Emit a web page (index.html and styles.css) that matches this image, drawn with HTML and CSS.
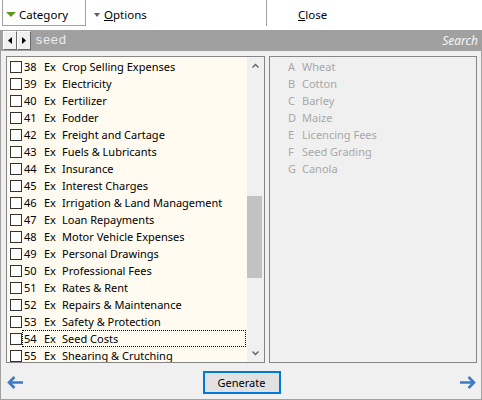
FILE: index.html
```html
<!DOCTYPE html>
<html>
<head>
<meta charset="utf-8">
<link rel="stylesheet" href="styles.css">
</head>
<body>
<div class="menubar">
  <div class="menu-left">
    <div class="menu cat"><span class="tri tri-green"></span><span>Category</span></div>
    <div class="menu opt"><span class="tri tri-gray"></span><span><u>O</u>ptions</span></div>
  </div>
  <div class="menu-right"><span><u>C</u>lose</span></div>
</div>
<div class="window">
  <div class="searchbar">
    <button class="nav"><svg width="4" height="7" viewBox="0 0 4 7"><path d="M4 0 L0 3.5 L4 7 Z" fill="#000"/></svg></button>
    <button class="nav"><svg width="4" height="7" viewBox="0 0 4 7"><path d="M0 0 L4 3.5 L0 7 Z" fill="#000"/></svg></button>
    <span class="query">seed</span>
    <span class="hint">Search</span>
  </div>
  <div class="panes">
    <div class="listbox">
      <ul class="items">
        <li class="row"><span class="cb"></span><span class="lbl"><span class="num">38</span><span class="ex">Ex</span><span>Crop Selling Expenses</span></span></li>
        <li class="row"><span class="cb"></span><span class="lbl"><span class="num">39</span><span class="ex">Ex</span><span>Electricity</span></span></li>
        <li class="row"><span class="cb"></span><span class="lbl"><span class="num">40</span><span class="ex">Ex</span><span>Fertilizer</span></span></li>
        <li class="row"><span class="cb"></span><span class="lbl"><span class="num">41</span><span class="ex">Ex</span><span>Fodder</span></span></li>
        <li class="row"><span class="cb"></span><span class="lbl"><span class="num">42</span><span class="ex">Ex</span><span>Freight and Cartage</span></span></li>
        <li class="row"><span class="cb"></span><span class="lbl"><span class="num">43</span><span class="ex">Ex</span><span>Fuels &amp; Lubricants</span></span></li>
        <li class="row"><span class="cb"></span><span class="lbl"><span class="num">44</span><span class="ex">Ex</span><span>Insurance</span></span></li>
        <li class="row"><span class="cb"></span><span class="lbl"><span class="num">45</span><span class="ex">Ex</span><span>Interest Charges</span></span></li>
        <li class="row"><span class="cb"></span><span class="lbl"><span class="num">46</span><span class="ex">Ex</span><span>Irrigation &amp; Land Management</span></span></li>
        <li class="row"><span class="cb"></span><span class="lbl"><span class="num">47</span><span class="ex">Ex</span><span>Loan Repayments</span></span></li>
        <li class="row"><span class="cb"></span><span class="lbl"><span class="num">48</span><span class="ex">Ex</span><span>Motor Vehicle Expenses</span></span></li>
        <li class="row"><span class="cb"></span><span class="lbl"><span class="num">49</span><span class="ex">Ex</span><span>Personal Drawings</span></span></li>
        <li class="row"><span class="cb"></span><span class="lbl"><span class="num">50</span><span class="ex">Ex</span><span>Professional Fees</span></span></li>
        <li class="row"><span class="cb"></span><span class="lbl"><span class="num">51</span><span class="ex">Ex</span><span>Rates &amp; Rent</span></span></li>
        <li class="row"><span class="cb"></span><span class="lbl"><span class="num">52</span><span class="ex">Ex</span><span>Repairs &amp; Maintenance</span></span></li>
        <li class="row"><span class="cb"></span><span class="lbl"><span class="num">53</span><span class="ex">Ex</span><span>Safety &amp; Protection</span></span></li>
        <li class="row"><span class="cb"></span><span class="lbl focus"><span class="num">54</span><span class="ex">Ex</span><span>Seed Costs</span></span></li>
        <li class="row"><span class="cb"></span><span class="lbl"><span class="num">55</span><span class="ex">Ex</span><span>Shearing &amp; Crutching</span></span></li>
      </ul>
      <div class="scrollbar">
        <div class="sb-btn"><svg width="7" height="5" viewBox="0 0 7 5"><path d="M0.5 4.5 L3.5 1.5 L6.5 4.5" fill="none" stroke="#606060" stroke-width="1.4"/></svg></div>
        <div class="sb-track"><div class="sb-thumb"></div></div>
        <div class="sb-btn"><svg width="7" height="5" viewBox="0 0 7 5"><path d="M0.5 0.5 L3.5 3.5 L6.5 0.5" fill="none" stroke="#606060" stroke-width="1.4"/></svg></div>
      </div>
    </div>
    <div class="subpanel">
      <ul class="subitems">
        <li class="srow"><span class="let">A</span><span>Wheat</span></li>
        <li class="srow"><span class="let">B</span><span>Cotton</span></li>
        <li class="srow"><span class="let">C</span><span>Barley</span></li>
        <li class="srow"><span class="let">D</span><span>Maize</span></li>
        <li class="srow"><span class="let">E</span><span>Licencing Fees</span></li>
        <li class="srow"><span class="let">F</span><span>Seed Grading</span></li>
        <li class="srow"><span class="let">G</span><span>Canola</span></li>
      </ul>
    </div>
  </div>
  <div class="footer">
    <svg class="arrow" width="17" height="13" viewBox="0 0 17 13"><path d="M7.5 1 L2 6.5 L7.5 12 M2.5 6.5 H16" fill="none" stroke="#3d7cc2" stroke-width="2.6"/></svg>
    <button class="generate">Generate</button>
    <svg class="arrow" width="17" height="13" viewBox="0 0 17 13"><path d="M9.5 1 L15 6.5 L9.5 12 M14.5 6.5 H1" fill="none" stroke="#3d7cc2" stroke-width="2.6"/></svg>
  </div>
</div>
</body>
</html>
```

FILE: styles.css
```css
* { box-sizing: border-box; }
html, body { margin: 0; padding: 0; }
body {
  width: 482px;
  height: 400px;
  overflow: hidden;
  background: #ffffff;
  font-family: "Noto Sans", "Open Sans", sans-serif;
  font-size: 11px;
  color: #000;
}
ul { list-style: none; margin: 0; padding: 0; }
button { font-family: inherit; margin: 0; padding: 0; }

.menubar { height: 30px; display: grid; grid-template-columns: 266px 1fr; }
.menu-left { display: flex; align-items: flex-start; }
.menu { display: flex; align-items: center; height: 26px; font-size: 11.5px; padding-top: 3px; }
.cat {
  width: 84px;
  margin-left: 2px;
  border: 1px solid #a0a0a0;
  border-top: none;
  padding-left: 3px;
}
.opt { margin-left: 8px; }
.tri { display: inline-block; width: 0; height: 0; border-style: solid; border-color: transparent; }
.tri-green { border-width: 5px 5px 0 5px; border-top-color: #5b9a1e; margin-right: 3px; }
.tri-gray { border-width: 4px 3.5px 0 3.5px; border-top-color: #606060; margin-right: 4px; }
.menu-right {
  height: 26px;
  border-left: 1px solid #a0a0a0;
  padding-left: 31px;
  padding-top: 3px;
  display: flex;
  align-items: center;
  font-size: 11.5px;
}

.window {
  height: 370px;
  border: 1px solid #a0a0a0;
  border-top: none;
  background: #f0f0f0;
}
.searchbar {
  height: 21px;
  background: #a0a0a0;
  display: flex;
  align-items: center;
  padding: 1px 2px;
}
.nav {
  width: 14px;
  height: 19px;
  background: #f0f0f0;
  border: 1px solid;
  border-color: #ffffff #696969 #696969 #ffffff;
  display: flex;
  align-items: center;
  justify-content: center;
}
.query {
  margin-left: 4px;
  font-family: "Liberation Mono", monospace;
  font-size: 13px;
  color: #ececec;
}
.hint {
  margin-left: auto;
  margin-right: 1px;
  font-style: italic;
  font-size: 12px;
  color: #f6f6f6;
}

.panes { display: flex; margin-top: 5px; padding-left: 5px; }
.listbox {
  width: 259px;
  height: 307px;
  border: 1px solid #868686;
  display: flex;
  overflow: hidden;
}
.items {
  width: 240px;
  background: #fffbf0;
  padding-top: 1px;
  overflow: hidden;
}
.row { height: 17px; display: flex; align-items: center; }
.cb {
  width: 12px;
  height: 12px;
  margin-left: 3px;
  border: 1px solid #333333;
  background: #ffffff;
  flex: none;
}
.lbl {
  flex: 1;
  margin-right: 1px;
  height: 17px;
  border: 1px solid transparent;
  padding-left: 1px;
  display: flex;
  align-items: center;
  white-space: nowrap;
}
.lbl.focus { border: 1px dotted #000; }
.num { width: 20px; }
.ex { width: 18px; }

.scrollbar { width: 17px; display: flex; flex-direction: column; background: #f0f0f0; }
.sb-btn { height: 17px; flex: none; display: flex; align-items: center; justify-content: center; }
.sb-track { flex: 1; }
.sb-thumb { margin-top: 122px; width: 15px; height: 82px; background: #c2c2c2; }

.subpanel {
  margin-left: 4px;
  width: 208px;
  height: 307px;
  border: 1px solid #868686;
  background: #f0f0f0;
}
.subitems { padding-top: 1px; padding-left: 18px; color: #a8a8a8; }
.srow { height: 17px; display: flex; align-items: center; }
.let { width: 14px; }

.footer {
  height: 35px;
  padding: 8px 5px 4px 6px;
  display: flex;
  align-items: center;
  justify-content: space-between;
}
.arrow { display: block; }
.generate {
  width: 78px;
  height: 23px;
  border: 2px solid #0078d7;
  background: #e1e1e1;
  font-size: 11px;
  color: #000;
}
```
